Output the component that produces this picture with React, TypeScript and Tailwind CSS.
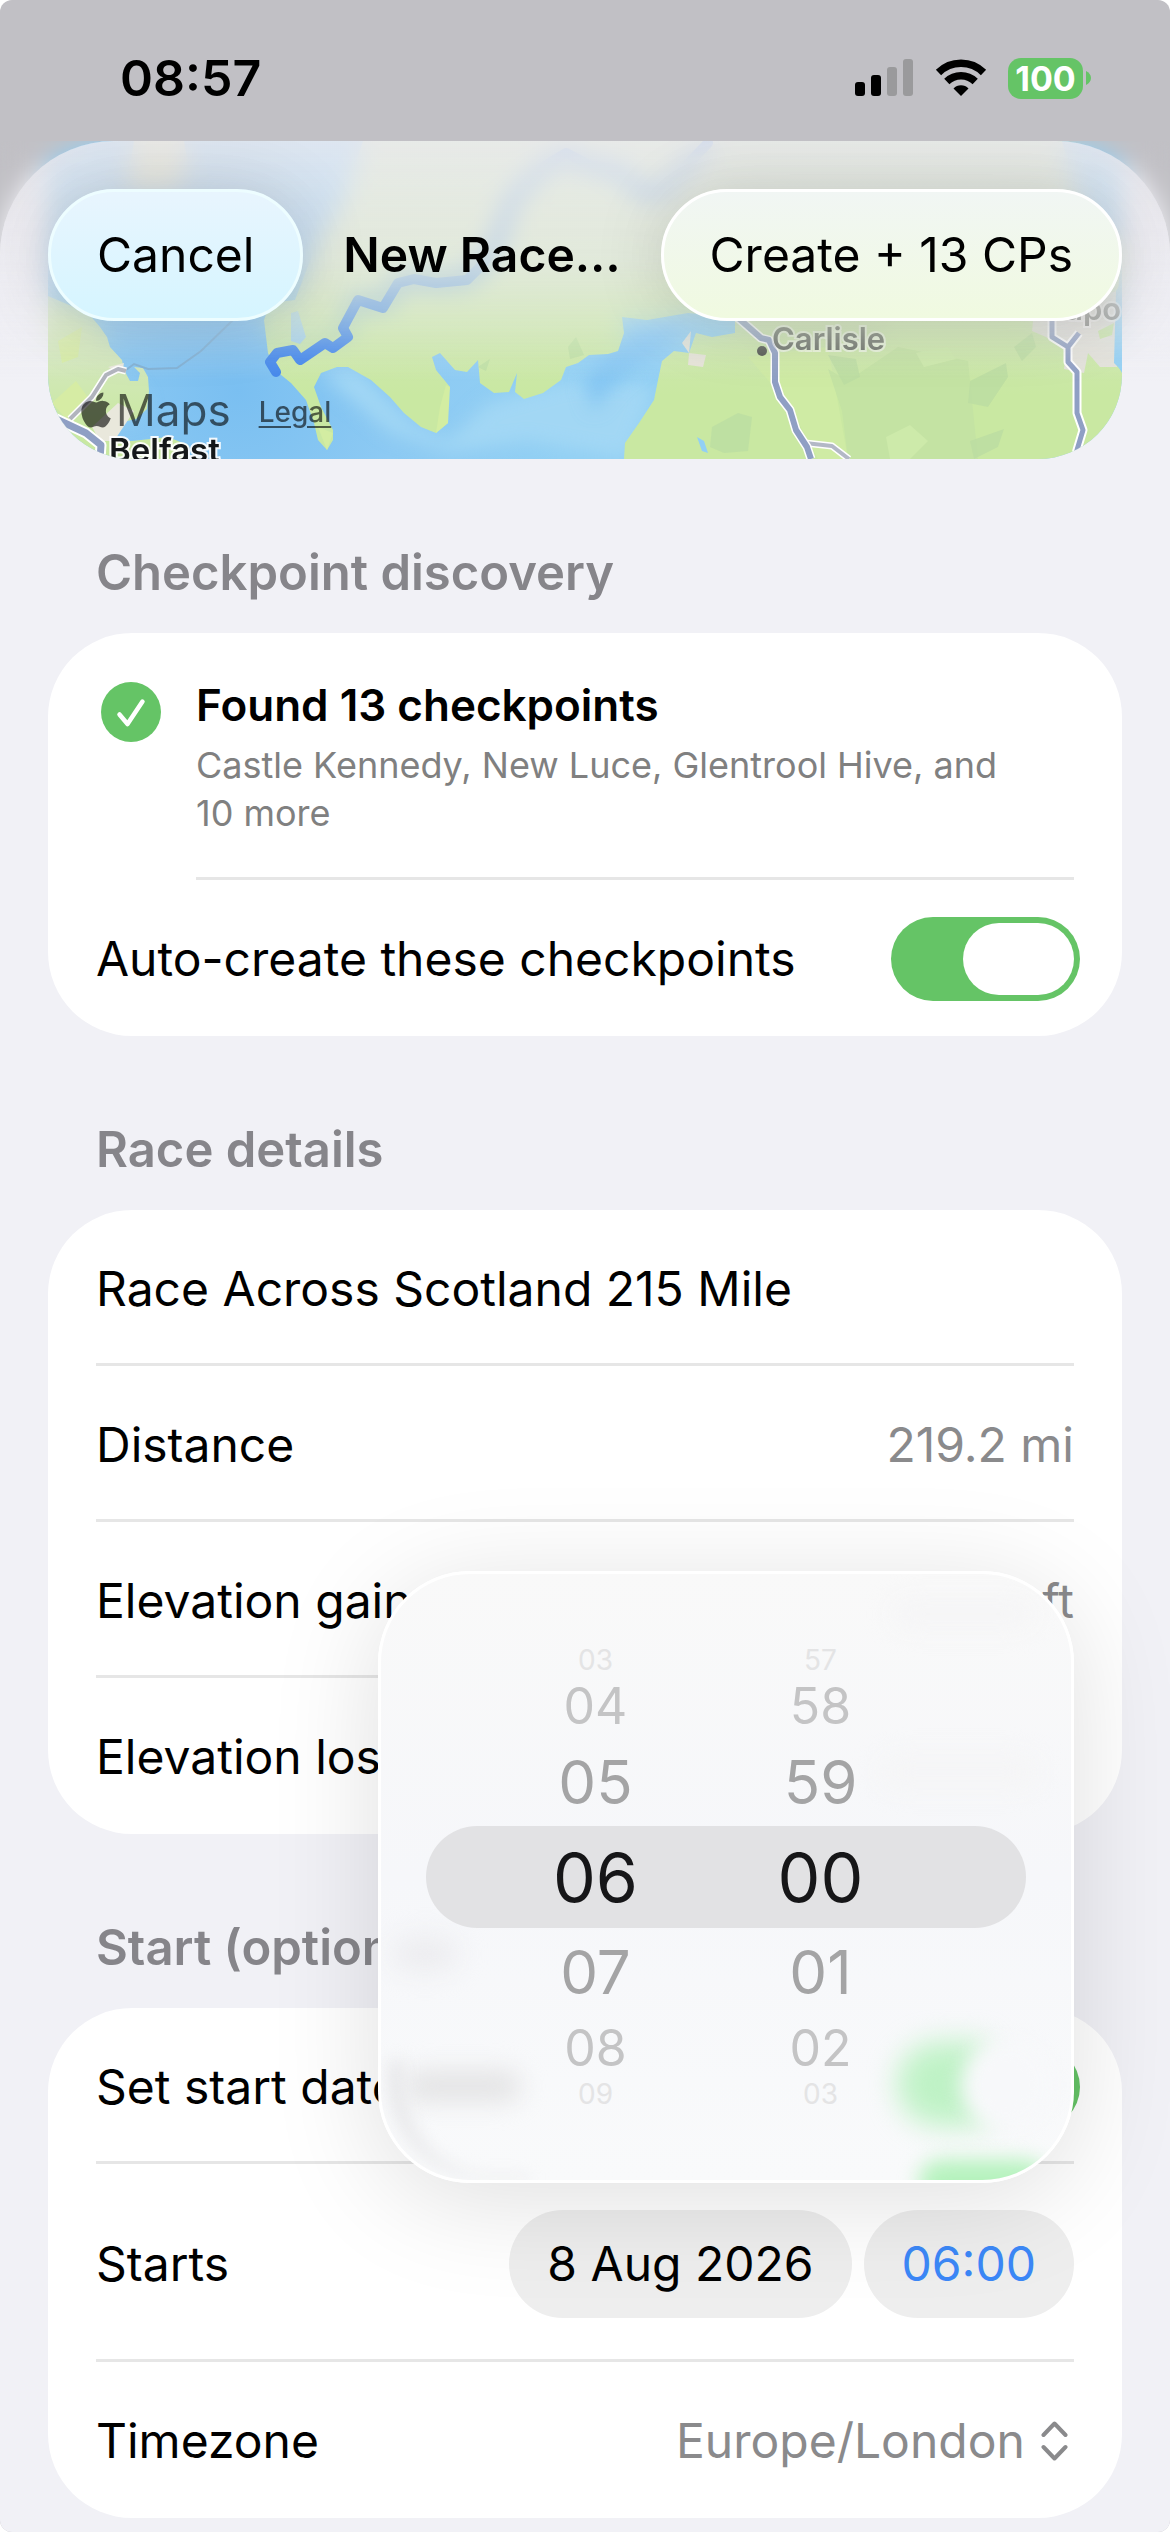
import React, { useState } from "react";
import { FaApple } from "react-icons/fa";

const hours = ["03", "04", "05", "06", "07", "08", "09"];
const minutes = ["57", "58", "59", "00", "01", "02", "03"];

// One entry for each row of the wheel, from the top edge to the bottom edge
const wheelRows = [
  "h-7 text-[28px] text-[#e4e4e5]",
  "h-16 text-[50px] text-[#c4c4c5]",
  "h-[88px] text-[60px] text-[#a4a4a5]",
  "h-[102px] text-[68px] text-[#161618]",
  "h-[88px] text-[60px] text-[#a4a4a5]",
  "h-16 text-[50px] text-[#c4c4c5]",
  "h-7 text-[28px] text-[#e4e4e5]",
];

const StatusBar = () => {
  return (
    <div className="flex h-[141px] items-center justify-between pt-[15px] pl-[120px] pr-[79px]">
      <span className="text-[50px] leading-[60px] font-semibold">08:57</span>
      <div className="flex items-center">
        <svg width="58" height="38" viewBox="0 0 58 38">
          <rect x="0" y="23" width="10" height="14" rx="3" fill="#000" />
          <rect x="16" y="16" width="10" height="21" rx="3" fill="#000" />
          <rect x="32" y="8" width="10" height="29" rx="3" fill="#9a9a9c" />
          <rect x="48" y="0" width="10" height="37" rx="3" fill="#9a9a9c" />
        </svg>
        <svg className="ml-[22px]" width="52" height="38" viewBox="0 0 52 38">
          <path d="M3.5 13.5 A32 32 0 0 1 48.5 13.5" fill="none" stroke="#000" strokeWidth="7.5" />
          <path d="M11.8 22.5 A20.5 20.5 0 0 1 40.2 22.5" fill="none" stroke="#000" strokeWidth="7.5" />
          <path d="M26 37 L18.5 29.5 A10.5 10.5 0 0 1 33.5 29.5 Z" fill="#000" />
        </svg>
        <div className="ml-[21px] flex h-[41px] w-[75px] items-center justify-center rounded-[13px] bg-[#65c466] text-[34px] leading-[41px] font-bold text-white">
          100
        </div>
        <svg className="ml-[3px]" width="5" height="14" viewBox="0 0 5 14">
          <path d="M0 0 C3 1.5 5 4 5 7 C5 10 3 12.5 0 14 Z" fill="#65c466" />
        </svg>
      </div>
    </div>
  );
};

const RouteMap = () => {
  const route =
    "M228 231 L222 221 L229 212 L245 209 L252 219 L277 202 L285 207 L300 196 L295 187 L310 159 L335 167 L350 142 L366 138 L388 142 L419 139 L434 124 L446 106 L456 80 L465 56 L495 26 L518 12 L541 24 L572 29 L593 52 L615 50 L637 26 L660 2";
  const motorway =
    "M680 168 L713 197 L721 199 L727 212 L727 241 L732 256 L742 269 L748 289 L759 306 L763 318";
  const eastRoad =
    "M1004 160 L1004 196 L1020 206 L1020 221 L1029 231 L1029 272 L1035 289 L1029 309 L1027 318 M1020 206 L1031 192";

  return (
    <svg className="block h-full w-full" viewBox="0 0 1074 318" preserveAspectRatio="xMidYMid slice">
      <defs>
        <radialGradient id="sea" gradientUnits="userSpaceOnUse" cx="190" cy="250" r="330">
          <stop offset="0" stopColor="#7abff1" />
          <stop offset="0.5" stopColor="#8dcaf3" />
          <stop offset="1" stopColor="#92d0f4" />
        </radialGradient>
        <linearGradient id="land" x1="0" y1="0" x2="0" y2="1">
          <stop offset="0.4" stopColor="#d3e8bb" />
          <stop offset="0.8" stopColor="#c9e8a2" />
        </linearGradient>
        <filter id="soft" x="-20%" y="-40%" width="140%" height="180%">
          <feGaussianBlur stdDeviation="9" />
        </filter>
      </defs>
      <rect width="1074" height="318" fill="url(#sea)" />
      {/* shallow water along the coast */}
      <g fill="#a2d7f4" filter="url(#soft)">
        <path d="M270 230 L310 228 L360 280 L400 300 L440 262 L520 240 L590 240 L606 250 L580 318 L480 300 L400 312 L340 290 Z" />
        <path d="M76 232 L100 262 L80 282 L70 270 Z" opacity="0.6" />
      </g>
      <path d="M536 240 L575 190 L640 180 L620 205 L570 240 L545 270 Z" fill="#85c6f2" filter="url(#soft)" />

      {/* Ireland */}
      <path
        d="M0 155 L40 172 L52 186 L59 196 L62 206 L74 219 L76 229 L82 240 L90 240 L92 232 L86 226 L95 227 L100 236 L101 250 L99 268 L88 278 L70 282 L66 300 L84 300 L120 296 L140 304 L140 318 L0 318 Z"
        fill="url(#land)"
      />
      <path d="M10 200 L34 186 L30 216 L14 222 Z M4 262 L28 240 L44 262 L22 282 Z" fill="#d6eca4" />
      <path d="M60 226 L76 222 L74 232 Z M44 286 L70 262 L86 270 L66 300 L52 300 Z" fill="#e9e8dc" />
      {/* Kintyre */}
      <path d="M86 0 L136 0 L140 24 L128 48 L80 48 L82 26 Z" fill="#dde3b0" />
      {/* Scotland and England */}
      <path
        d="M315 0 L296 59 L270 99 L247 159 L222 162 L216 179 L220 212 L227 229 L243 242 L258 259 L266 282 L270 299 L279 309 L285 299 L285 289 L273 266 L266 246 L273 232 L289 226 L300 226 L323 239 L342 256 L356 272 L373 286 L388 292 L400 282 L398 262 L402 246 L388 229 L384 216 L392 212 L407 229 L419 231 L430 219 L432 242 L446 252 L461 251 L469 232 L467 251 L476 258 L495 252 L513 239 L518 226 L530 222 L541 214 L560 213 L570 210 L576 192 L574 176 L599 179 L640 172 L687 176 L687 192 L664 196 L648 192 L641 212 L626 210 L614 220 L610 239 L606 259 L591 282 L577 302 L576 318 L1074 318 L1074 232 L1067 220 L1067 192 L1074 100 L1040 90 L1027 46 L1014 0 Z"
        fill="url(#land)"
      />
      <path d="M398 244 L402 246 L400 282 L388 292 L392 266 Z M270 286 L285 292 L279 309 Z" fill="#d3eda2" />
      <path d="M243 172 L250 170 L258 196 L252 203 L243 200 Z" fill="#a8d4ee" />
      <path d="M643 190 L634 202 L641 212 L658 214 L655 226 L640 224 Z" fill="#e6e4d8" />
      <path d="M649 296 L656 300 L660 312 L654 310 Z" fill="#92d0f4" />
      {/* hills */}
      <path d="M700 216 L780 206 L800 318 L770 318 L740 262 Z" fill="#cfeba4" />
      <path d="M780 228 L800 240 L850 206 L920 220 L930 318 L800 318 L794 270 Z" fill="#c4e3a3" />
      <g fill="#bcdda2" opacity="0.8">
        <path d="M780 214 L808 218 L812 236 L796 244 Z" />
        <path d="M966 206 L984 192 L988 206 L974 220 Z" />
        <path d="M922 240 L958 222 L960 236 L940 266 L920 262 Z" />
        <path d="M922 300 L956 288 L950 306 L926 318 Z" />
        <path d="M664 286 L690 272 L704 276 L700 310 L676 312 L662 306 Z" />
        <path d="M520 206 L528 196 L536 214 L522 218 Z" />
        <path d="M430 226 L442 218 L438 230 Z" />
      </g>
      <path d="M838 296 L862 284 L880 300 L862 318 L842 318 Z M868 212 L900 206 L908 218 L876 226 Z" fill="#cdeaaa" />
      {/* Tyneside */}
      <path d="M987 160 L1074 150 L1069 226 L1052 226 L1040 212 L1036 232 L1016 228 L1018 208 L998 196 L984 190 Z" fill="#e3e2da" />
      <path d="M1050 190 L1066 182 L1064 194 L1052 198 Z" fill="#c9e8a2" />
      <path d="M1068 150 L1074 140 L1074 230 L1066 222 Z" fill="#92d0f4" />

      {/* ferry line */}
      <path d="M78 229 L86 223 L100 228 L129 227 L153 210 L188 176" fill="none" stroke="#7fb0d4" strokeWidth="2" />
      <g fill="none" strokeLinejoin="round">
        <path d="M22 278 L44 256 L58 234 L70 228 L78 230" stroke="#fff" strokeWidth="7" />
        <path d="M22 278 L44 256 L58 234 L70 228 L78 230" stroke="#b1b4bd" strokeWidth="4" />
        <path d="M6 277 L38 292 L53 304 L52 318" stroke="#fff" strokeWidth="11" />
        <path d="M6 277 L38 292 L53 304 L52 318" stroke="#8f9fc4" strokeWidth="7" />
        <path d="M757 302 L784 305 L801 318" stroke="#fff" strokeWidth="7" />
        <path d="M757 302 L784 305 L801 318" stroke="#b3b8c6" strokeWidth="4" />
        <path d={motorway} stroke="#fff" strokeWidth="9" />
        <path d={motorway} stroke="#8f9fc4" strokeWidth="6" />
        <path d={eastRoad} stroke="#fff" strokeWidth="9" />
        <path d={eastRoad} stroke="#8f9fc4" strokeWidth="5" />
        <path d={route} stroke="#4488ec" strokeWidth="10" strokeLinecap="round" />
      </g>

      <circle cx="714" cy="210" r="5" fill="#4b4f49" />
      <g fontFamily="Inter, sans-serif" fontWeight="600" stroke="#fff" strokeWidth="4" paintOrder="stroke" strokeOpacity="0.6">
        <text x="724" y="209" fontSize="31" fill="#666b63">Carlisle</text>
        <text x="1016" y="179" fontSize="31" fill="#777a74">upo</text>
        <text x="61" y="321" fontSize="33" fill="#15181a" strokeOpacity="0.9">Belfast</text>
      </g>
    </svg>
  );
};

const Toggle = ({ id }: { id: string }) => {
  const [on, setOn] = useState(true);

  return (
    <input
      id={id}
      type="checkbox"
      role="switch"
      checked={on}
      onChange={() => setOn(!on)}
      className="-mr-1.5 h-[84px] w-[189px] shrink-0 appearance-none rounded-full bg-[#d9d9de] p-1.5 before:block before:h-[72px] before:w-[111px] before:rounded-full before:bg-white before:content-[''] checked:bg-[#65c466] checked:before:ml-[66px]"
    />
  );
};

const Section = ({ title, children }: { title: string; children: React.ReactNode }) => {
  return (
    <section>
      <h2 className="px-12 pt-[84px] pb-[30px] text-[49px] leading-[60px] font-semibold text-[#86858a]">{title}</h2>
      <div className="rounded-[84px] bg-white px-12">{children}</div>
    </section>
  );
};

const Row = ({ last, tall, children }: { last?: boolean; tall?: boolean; children: React.ReactNode }) => {
  return (
    <div
      className={`flex items-center justify-between gap-6 border-b-[3px] pt-[5px] ${tall ? "h-[198px]" : "h-[156px]"} ${
        last ? "border-transparent" : "border-[#e6e6e6]"
      }`}
    >
      {children}
    </div>
  );
};

const WheelColumn = ({ label, values }: { label: string; values: string[] }) => {
  return (
    <div role="listbox" aria-label={label} className="flex w-[225px] flex-col">
      {values.map((value, index) => (
        <button
          key={value}
          role="option"
          aria-selected={index === 3}
          className={`flex items-center justify-center leading-none ${wheelRows[index]}`}
        >
          {value}
        </button>
      ))}
    </div>
  );
};

// Soft shapes that show through the frosted panel
const Frost = () => {
  return (
    <div className="absolute inset-0">
      <div className="absolute top-6 right-9 h-8 w-36 rounded-full bg-[#f5f5f6] blur-[12px]" />
      <div className="absolute top-[180px] right-8 h-9 w-40 rounded-full bg-[#f5f5f6] blur-[12px]" />
      <div className="absolute top-[364px] left-3 h-8 w-16 rounded-full bg-[#ebebee] blur-[14px]" />
      <div className="absolute bottom-[78px] left-6 h-8 w-[116px] rounded-full bg-[#e4e4e5] blur-[12px]" />
      <div className="absolute bottom-0 left-2 h-[120px] w-[140px] rounded-bl-[100px] border-b-4 border-l-[14px] border-[#e6e6e8] blur-[8px]" />
      <div className="absolute right-[84px] bottom-[54px] h-[84px] w-[90px] rounded-l-full bg-[#bff2c6] blur-[14px]" />
      <div className="absolute right-5 bottom-[50px] h-[90px] w-[90px] rounded-full bg-[#f7f8fa] blur-[10px]" />
      <div className="absolute right-6 -bottom-6 h-11 w-32 rounded-full bg-[#b5f2bd] blur-[10px]" />
    </div>
  );
};

const TimePopover = () => {
  return (
    <div className="absolute right-0 bottom-full z-10 mb-[27px] w-[696px] overflow-hidden rounded-[92px] border-[3px] border-white bg-linear-to-b from-[#f9f9f9] via-[#f6f7fa] to-[#f9fafb] py-[72px] shadow-[0_16px_110px_rgba(0,0,0,0.13)]">
      <Frost />
      <div className="absolute inset-x-[45px] top-1/2 h-[102px] -translate-y-1/2 rounded-full bg-[#e2e2e4]" />
      <div className="relative flex justify-center pr-[36px]">
        <WheelColumn label="Hour" values={hours} />
        <WheelColumn label="Minute" values={minutes} />
      </div>
    </div>
  );
};

const App = () => {
  const [raceName, setRaceName] = useState("Race Across Scotland 215 Mile");

  return (
    <div className="overflow-hidden rounded-[12px] bg-[#c1c0c5] font-[Inter,sans-serif] text-[48px] leading-[60px] text-black">
      <StatusBar />
      <div className="relative overflow-hidden rounded-t-[114px] bg-[#f1f1f6] pb-[14px]">
        <header className="absolute inset-x-0 top-0 z-10">
          <div className="absolute inset-x-0 top-0 h-[220px] backdrop-blur-[12px] [mask-image:linear-gradient(to_bottom,black_50%,transparent)]" />
          <div className="absolute inset-x-0 top-0 h-[240px] bg-linear-to-b from-[#ebeaf0]/85 via-[#ebeaf0]/60 to-transparent" />
          <div className="relative flex items-center justify-between px-12 pt-12">
            <button className="h-[132px] rounded-full border-[3px] border-[#edfdff] bg-linear-to-b from-[#e8f5fe] to-[#d5f5ff] px-[46px] shadow-[0_0_70px_rgba(0,0,0,0.16)]">
              Cancel
            </button>
            <h1 className="font-semibold">New Race…</h1>
            <button className="h-[132px] rounded-full border-[3px] border-white bg-linear-to-b from-[#f1f6f4] to-[#f0fae0] px-[46px] shadow-[0_0_70px_rgba(0,0,0,0.16)]">
              Create + 13 CPs
            </button>
          </div>
        </header>

        <main className="px-12">
          <div className="relative h-[318px] overflow-hidden rounded-b-[84px]">
            <RouteMap />
            <div className="absolute bottom-[22px] left-7 flex items-center leading-[50px] text-black/60">
              <FaApple className="size-10" />
              <span className="text-[44px]">Maps</span>
              <a href="#legal" className="ml-7 pt-1 text-[28px] font-medium underline underline-offset-4">
                Legal
              </a>
            </div>
          </div>

          <Section title="Checkpoint discovery">
            <div className="flex">
              <div className="w-[100px] shrink-0 pt-[49px] pl-[5px]">
                <svg width="60" height="60" viewBox="0 0 60 60">
                  <circle cx="30" cy="30" r="30" fill="#65c466" />
                  <path d="M18.5 32.5 L26.5 42 L41.5 19.5" fill="none" stroke="#fff" strokeWidth="4.5" strokeLinecap="round" strokeLinejoin="round" />
                </svg>
              </div>
              <div className="grow border-b-[3px] border-[#e6e6e6] pt-[42px] pb-[40px]">
                <h3 className="text-[44px] font-semibold">Found 13 checkpoints</h3>
                <p className="mt-1.5 max-w-[830px] text-[36px] leading-[48px] text-[#808080]">
                  Castle Kennedy, New Luce, Glentrool Hive, and 10 more
                </p>
              </div>
            </div>
            <Row last>
              <label htmlFor="auto-create">Auto-create these checkpoints</label>
              <Toggle id="auto-create" />
            </Row>
          </Section>

          <Section title="Race details">
            <Row>
              <input
                aria-label="Race name"
                value={raceName}
                onChange={(e) => setRaceName(e.target.value)}
                className="w-full bg-transparent outline-none"
              />
            </Row>
            <Row>
              <span>Distance</span>
              <span className="text-[#8a8a8c]">219.2 mi</span>
            </Row>
            <Row>
              <span>Elevation gain</span>
              <span className="text-[#8a8a8c]">26,247 ft</span>
            </Row>
            <Row last>
              <span>Elevation loss</span>
              <span className="text-[#8a8a8c]">26,247 ft</span>
            </Row>
          </Section>

          <Section title="Start (optional)">
            <Row>
              <label htmlFor="set-start">Set start date/time</label>
              <Toggle id="set-start" />
            </Row>
            <Row tall>
              <span>Starts</span>
              <div className="relative flex gap-3">
                <button className="h-[108px] rounded-full bg-[#eeeeee] px-[38px]">8 Aug 2026</button>
                <button className="h-[108px] rounded-full bg-[#eeeeee] px-[38px] text-[#3c88f7]">06:00</button>
                <TimePopover />
              </div>
            </Row>
            <Row last>
              <label htmlFor="timezone">Timezone</label>
              <div className="flex items-center gap-4 pr-1.5 text-[#8a8a8c]">
                <select id="timezone" className="appearance-none bg-transparent outline-none">
                  <option>Europe/London</option>
                </select>
                <svg width="27" height="40" viewBox="0 0 27 40" fill="none" stroke="currentColor" strokeWidth="4" strokeLinecap="round" strokeLinejoin="round">
                  <path d="M2.5 14 L13.5 2.5 L24.5 14 M2.5 26 L13.5 37.5 L24.5 26" />
                </svg>
              </div>
            </Row>
          </Section>
        </main>
      </div>
    </div>
  );
};

export default App;
